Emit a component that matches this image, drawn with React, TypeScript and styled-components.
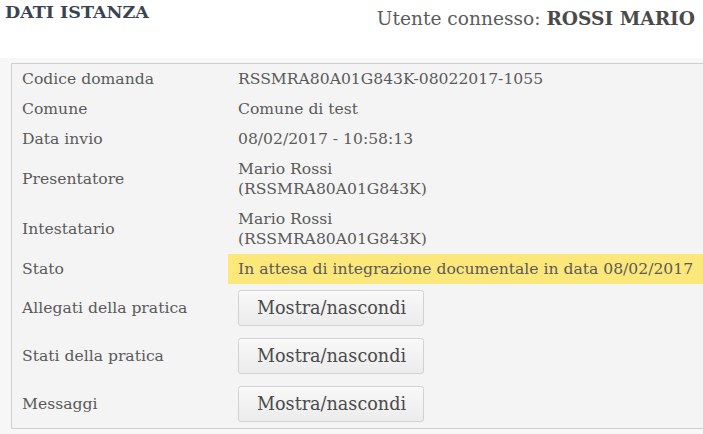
import { FC } from "react";
import styled, { createGlobalStyle } from "styled-components";

const GlobalStyle = createGlobalStyle`
  html, body {
    margin: 0;
    padding: 0;
    background: #fff;
    overflow: hidden;
  }
  body {
    font-family: "DejaVu Serif", "Liberation Serif", serif;
    color: #555;
  }
`;

type Row = { label: string; value?: string[]; status?: boolean; toggle?: boolean };

const rows: Row[] = [
  { label: "Codice domanda", value: ["RSSMRA80A01G843K-08022017-1055"] },
  { label: "Comune", value: ["Comune di test"] },
  { label: "Data invio", value: ["08/02/2017 - 10:58:13"] },
  { label: "Presentatore", value: ["Mario Rossi", "(RSSMRA80A01G843K)"] },
  { label: "Intestatario", value: ["Mario Rossi", "(RSSMRA80A01G843K)"] },
  {
    label: "Stato",
    value: ["In attesa di integrazione documentale in data 08/02/2017"],
    status: true,
  },
  { label: "Allegati della pratica", toggle: true },
  { label: "Stati della pratica", toggle: true },
  { label: "Messaggi", toggle: true },
];

const App: FC = () => (
  <>
    <GlobalStyle />
    <Page>
      <Header>
        <Title>DATI ISTANZA</Title>
        <User>
          Utente connesso: <b>ROSSI MARIO</b>
        </User>
      </Header>
      <Wrapper>
        <Table>
          <tbody>
            {rows.map((row) => (
              <tr key={row.label}>
                <Label>{row.label}</Label>
                <Value status={row.status} toggle={row.toggle}>
                  {row.toggle ? (
                    <ToggleButton type="button">Mostra/nascondi</ToggleButton>
                  ) : (
                    row.value?.map((line) => <div key={line}>{line}</div>)
                  )}
                </Value>
              </tr>
            ))}
          </tbody>
        </Table>
      </Wrapper>
    </Page>
  </>
);

export default App;

const Page = styled.div`
  width: 703px;
  height: 434px;
  overflow: hidden;
`;

const Header = styled.div`
  display: flex;
  justify-content: space-between;
  align-items: flex-start;
  height: 58px;
  padding: 0 8px 0 5px;
`;

const Title = styled.h1`
  margin: 2px 0 0;
  font-size: 17.5px;
  font-weight: 700;
  color: #3a4352;
`;

const User = styled.div`
  margin-top: 8px;
  font-size: 18.6px;
  color: #5c5c5c;

  b {
    font-weight: 700;
    color: #4a4a4a;
  }
`;

const Wrapper = styled.div`
  background: #f7f7f7;
  padding: 5px 0 6px 11px;
  width: 740px;
`;

const Table = styled.table`
  width: 100%;
  border-collapse: collapse;
  background: #f4f4f4;
  border: 1px solid #cfcfcf;
  font-size: 15.6px;
  line-height: 20px;
`;

const Label = styled.td`
  width: 196px;
  padding: 5px 10px;
  vertical-align: middle;
  color: #5a5a5a;
`;

const Value = styled.td<{ status?: boolean; toggle?: boolean }>`
  padding: ${(p) => (p.toggle ? "6px 10px" : "5px 10px")};
  vertical-align: middle;
  color: #5a5a5a;
  background: ${(p) => (p.status ? "#fbe77a" : "transparent")};
`;

const ToggleButton = styled.button`
  display: block;
  height: 36px;
  width: 186px;
  padding: 0 18px;
  font-family: inherit;
  font-size: 17.6px;
  color: #4a4a4a;
  background: linear-gradient(#f8f8f8, #ececec);
  border: 1px solid #d2d2d2;
  border-radius: 3px;
  box-shadow: inset 0 1px 0 #fff;
`;
